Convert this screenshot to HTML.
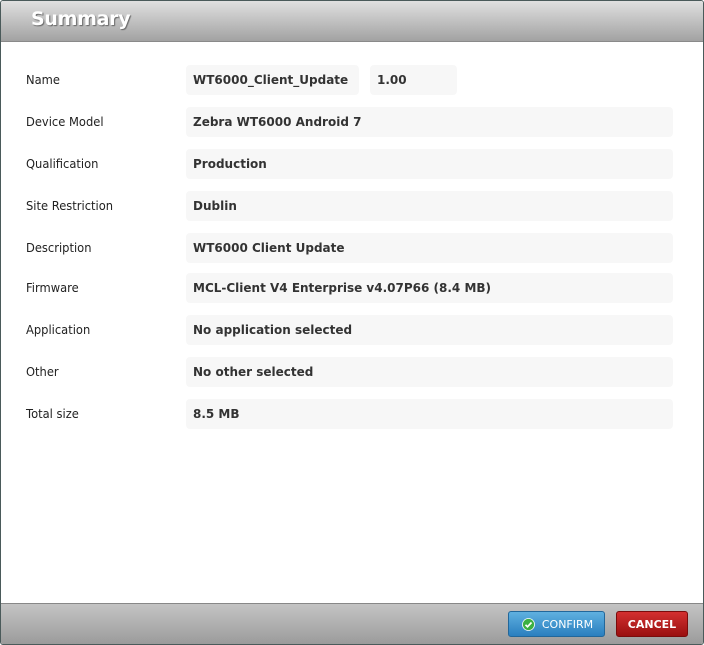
<!DOCTYPE html>
<html><head><style>
*{margin:0;padding:0;box-sizing:border-box}
body{width:704px;height:645px;overflow:hidden;background:#fff;font-family:"DejaVu Sans","Liberation Sans",sans-serif;}
.frame{position:absolute;left:0;top:0;width:704px;height:645px;border:1px solid #4a5a5a;border-radius:3px;overflow:hidden;background:#fff}
.hdr{position:absolute;left:0;top:0;width:702px;height:41px;background:linear-gradient(#e0e0e0,#a2a2a2);border-bottom:1px solid #8a8a8a}
.hdr span{position:absolute;left:30px;top:7px;font-size:19px;font-weight:bold;color:#fff;text-shadow:1px 1px 1px #666;font-family:"DejaVu Sans",sans-serif;letter-spacing:-0.3px}
.lbl{position:absolute;left:25px;font-size:12.5px;color:#222;transform:scaleX(0.92);transform-origin:left}
.box{position:absolute;height:30px;background:#f7f7f7;border-radius:4px;font-size:12px;font-weight:bold;color:#333;padding-left:7px;line-height:30px}
.ftr{position:absolute;left:0;top:602px;width:702px;height:42px;background:linear-gradient(#c4c4c4,#9a9a9a);border-top:1px solid #888}
.btn{position:absolute;top:7px;height:26px;border-radius:3px;font-size:11px;color:#fff;line-height:26px;text-align:center}
</style></head><body>
<div class="frame">
<div class="hdr"><span>Summary</span></div>

<div class="lbl" style="top:71px">Name</div>
<div class="box" style="left:185px;top:64px;width:173px">WT6000_Client_Update</div>
<div class="box" style="left:369px;top:64px;width:87px">1.00</div>

<div class="lbl" style="top:113px">Device Model</div>
<div class="box" style="left:185px;top:106px;width:487px">Zebra WT6000 Android 7</div>
<div class="lbl" style="top:155px">Qualification</div>
<div class="box" style="left:185px;top:148px;width:487px">Production</div>
<div class="lbl" style="top:197px">Site Restriction</div>
<div class="box" style="left:185px;top:190px;width:487px">Dublin</div>
<div class="lbl" style="top:239px">Description</div>
<div class="box" style="left:185px;top:232px;width:487px">WT6000 Client Update</div>
<div class="lbl" style="top:279px">Firmware</div>
<div class="box" style="left:185px;top:272px;width:487px">MCL-Client V4 Enterprise v4.07P66 (8.4 MB)</div>
<div class="lbl" style="top:321px">Application</div>
<div class="box" style="left:185px;top:314px;width:487px">No application selected</div>
<div class="lbl" style="top:363px">Other</div>
<div class="box" style="left:185px;top:356px;width:487px">No other selected</div>
<div class="lbl" style="top:405px">Total size</div>
<div class="box" style="left:185px;top:398px;width:487px">8.5 MB</div>

<div class="ftr">
<div class="btn" style="left:507px;width:97px;background:linear-gradient(#5fb0e0,#2a7fbf);border:1px solid #22679a">
<svg width="13" height="13" style="position:absolute;left:13px;top:6px" viewBox="0 0 13 13"><circle cx="6.5" cy="6.5" r="6" fill="#3cb043" stroke="#fff" stroke-width="0.8"/><path d="M3.5 6.8l2 2 4-4.3" stroke="#fff" stroke-width="1.7" fill="none"/></svg>
<span style="margin-left:22px">CONFIRM</span></div>
<div class="btn" style="left:615px;width:72px;background:linear-gradient(#d33030,#9a1010);border:1px solid #7a0c0c;font-weight:bold">CANCEL</div>
</div>
</div>
</body></html>
